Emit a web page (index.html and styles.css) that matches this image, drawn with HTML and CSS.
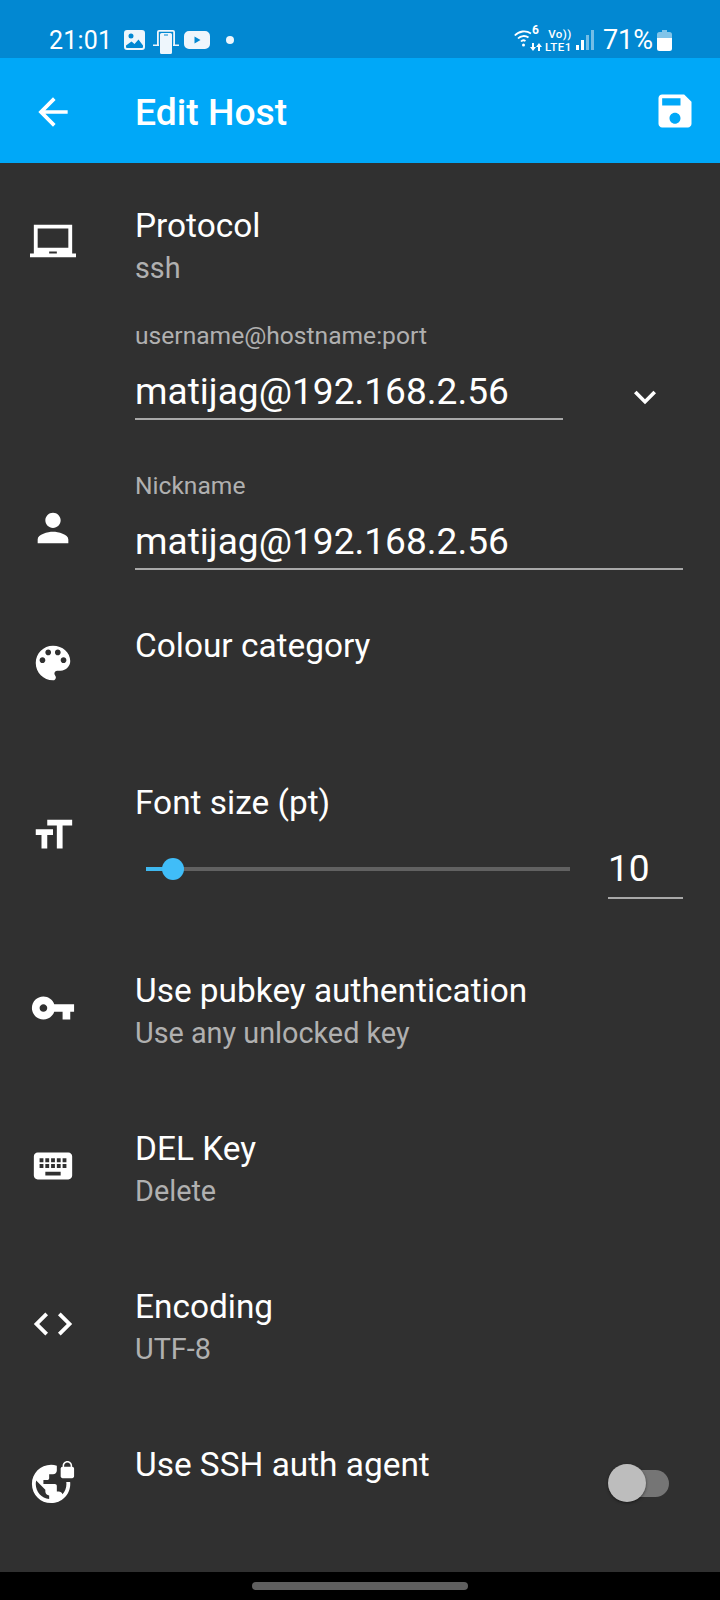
FILE: index.html
```html
<!DOCTYPE html>
<html lang="en">
<head>
<meta charset="utf-8">
<title>Edit Host</title>
<link rel="stylesheet" href="styles.css">
</head>
<body>
<div class="phone">
  <header class="status">
    <span class="clock">21:01</span>
    <div class="notif">
      <svg class="si-img" viewBox="0 0 21 20"><path fill-rule="evenodd" d="M3 0h15a3 3 0 0 1 3 3v14a3 3 0 0 1-3 3H3a3 3 0 0 1-3-3V3a3 3 0 0 1 3-3zM2 15.500V17a1 1 0 0 0 1 1h15a1 1 0 0 0 1-1v-1.500l-4.500-6-4 4.500-3-2.500zM7 3.500a2.500 2.500 0 1 0 0 5 2.500 2.500 0 0 0 0-5z"/></svg>
      <svg class="si-link" viewBox="0 0 26 24"><path d="M4 2A2 2 0 0 1 6 0h14a2 2 0 0 1 2 2v13h-1.800V2A.2.2 0 0 0 20 1.800H6a.2.2 0 0 0-.2.2v13H4zM0 14.500h6V16H0zM20 14.500h6V16h-6z"/><path fill-rule="evenodd" d="M8.500 3h9A1.500 1.500 0 0 1 19 4.500v18a1.500 1.500 0 0 1-1.500 1.500h-9A1.500 1.500 0 0 1 7 22.500v-18A1.500 1.500 0 0 1 8.500 3zM11 4.500v1h4v-1z"/></svg>
      <svg class="si-yt" viewBox="0 0 26 18"><path fill-rule="evenodd" d="M5 0h16a5 5 0 0 1 5 5v8a5 5 0 0 1-5 5H5a5 5 0 0 1-5-5V5a5 5 0 0 1 5-5zM10.500 5.500v7l6-3.500z"/></svg>
      <span class="dot"></span>
    </div>
    <div class="sys">
      <svg class="si-wifi" viewBox="0 0 29 21"><path class="arc" d="M.8 5.500A12.500 12.500 0 0 1 17 3.500M4 8.500A8 8 0 0 1 14.500 7.500M7 11.500A3.500 3.500 0 0 1 11.500 11"/><circle cx="9.500" cy="15" r="1.500"/><path d="M18 13h2v4h2l-3 4-3-4h2zM26 21h-2v-4h-2l3-4 3 4h-2z"/></svg>
      <span class="six">6</span>
      <div class="volte"><span>Vo))</span><span>LTE1</span></div>
      <svg class="si-bars" viewBox="0 0 19 20"><rect x="0" y="15" width="3" height="5" fill="#fff"/><rect x="5" y="10" width="3" height="10" fill="#fff"/><rect x="10" y="5" width="3" height="15" fill="#fff" opacity=".45"/><rect x="15" y="0" width="3" height="20" fill="#fff" opacity=".45"/></svg>
      <span class="pct">71%</span>
      <svg class="si-bat" viewBox="0 0 15 21"><path opacity=".5" d="M5 0h5v2h2.500A2.500 2.500 0 0 1 15 4.500V8H0V4.500A2.500 2.500 0 0 1 2.500 2H5z"/><path d="M0 8h15v10.500a2.500 2.500 0 0 1-2.500 2.500h-10A2.500 2.500 0 0 1 0 18.500z"/></svg>
    </div>
  </header>

  <div class="appbar">
    <svg class="bar-icon back" viewBox="0 0 24 24"><path d="M20 11H7.830l5.590-5.590L12 4l-8 8 8 8 1.410-1.410L7.830 13H20v-2z"/></svg>
    <h1 class="bar-title">Edit Host</h1>
    <svg class="bar-icon save" viewBox="0 0 24 24"><path d="M17 3H5c-1.110 0-2 .9-2 2v14c0 1.100.89 2 2 2h14c1.100 0 2-.9 2-2V7l-4-4zm-5 16c-1.660 0-3-1.340-3-3s1.340-3 3-3 3 1.340 3 3-1.340 3-3 3zm3-10H5V5h10v4z"/></svg>
  </div>

  <main class="content">
    <section class="row row-protocol">
      <svg class="icon" viewBox="0 0 24 24"><path d="M22 18V3H2v15H0v2h24v-2h-2zm-8 0h-4v-1h4v1zm6-3H4V5h16v10z"/></svg>
      <div class="body">
        <div class="title">Protocol</div>
        <div class="sub">ssh</div>
      </div>
    </section>

    <section class="field field-uri">
      <div class="field-main">
        <label class="field-label">username@hostname:port</label>
        <div class="field-value">matijag@192.168.2.56</div>
      </div>
      <svg class="chevron" viewBox="0 0 24 24"><path d="M16.590 8.590L12 13.170 7.410 8.590 6 10l6 6 6-6z"/></svg>
    </section>

    <section class="field field-nick">
      <svg class="icon" viewBox="0 0 24 24"><path d="M12 12c2.210 0 4-1.790 4-4s-1.790-4-4-4-4 1.790-4 4 1.790 4 4 4zm0 2c-2.670 0-8 1.340-8 4v2h16v-2c0-2.660-5.330-4-8-4z"/></svg>
      <div class="field-main">
        <label class="field-label">Nickname</label>
        <div class="field-value">matijag@192.168.2.56</div>
      </div>
    </section>

    <section class="row row-colour">
      <svg class="icon" viewBox="0 0 24 24"><path d="M12 3c-4.970 0-9 4.030-9 9s4.030 9 9 9c.83 0 1.500-.67 1.500-1.500 0-.39-.15-.74-.39-1.010-.23-.26-.38-.61-.38-.99 0-.83.67-1.500 1.500-1.500H16c2.760 0 5-2.240 5-5 0-4.420-4.030-8-9-8zm-5.500 9c-.83 0-1.500-.67-1.500-1.500S5.670 9 6.500 9 8 9.670 8 10.500 7.330 12 6.500 12zm3-4C8.670 8 8 7.330 8 6.500S8.670 5 9.500 5s1.500.67 1.500 1.500S10.330 8 9.500 8zm5 0c-.83 0-1.500-.67-1.500-1.500S13.670 5 14.500 5s1.500.67 1.500 1.500S15.330 8 14.500 8zm3 4c-.83 0-1.500-.67-1.500-1.500S16.670 9 17.500 9s1.500.67 1.500 1.500-.67 1.500-1.500 1.500z"/></svg>
      <div class="body"><div class="title">Colour category</div></div>
    </section>

    <section class="row row-font">
      <svg class="icon" viewBox="0 0 24 24"><path d="M9 4v3h5v12h3V7h5V4H9zm-6 8h3v7h3v-7h3V9H3v3z"/></svg>
      <div class="body">
        <div class="title">Font size (pt)</div>
        <div class="slider-line">
          <div class="slider"><span class="track-on"></span><span class="thumb"></span></div>
          <div class="num">10</div>
        </div>
      </div>
    </section>

    <section class="row">
      <svg class="icon" viewBox="0 0 24 24"><path d="M12.650 10C11.830 7.670 9.610 6 7 6c-3.310 0-6 2.690-6 6s2.690 6 6 6c2.610 0 4.830-1.670 5.650-4H17v4h4v-4h2v-4H12.650zM7 14c-1.100 0-2-.9-2-2s.9-2 2-2 2 .9 2 2-.9 2-2 2z"/></svg>
      <div class="body">
        <div class="title">Use pubkey authentication</div>
        <div class="sub">Use any unlocked key</div>
      </div>
    </section>

    <section class="row">
      <svg class="icon" viewBox="0 0 24 24"><path d="M20 5H4c-1.100 0-1.990.9-1.990 2L2 17c0 1.100.9 2 2 2h16c1.100 0 2-.9 2-2V7c0-1.100-.9-2-2-2zm-9 3h2v2h-2V8zm0 3h2v2h-2v-2zM8 8h2v2H8V8zm0 3h2v2H8v-2zm-1 2H5v-2h2v2zm0-3H5V8h2v2zm9 7H8v-2h8v2zm0-4h-2v-2h2v2zm0-3h-2V8h2v2zm3 3h-2v-2h2v2zm0-3h-2V8h2v2z"/></svg>
      <div class="body">
        <div class="title">DEL Key</div>
        <div class="sub">Delete</div>
      </div>
    </section>

    <section class="row">
      <svg class="icon" viewBox="0 0 24 24"><path d="M9.400 16.600L4.800 12l4.600-4.600L8 6l-6 6 6 6 1.400-1.400zm5.200 0l4.600-4.600-4.600-4.600L16 6l6 6-6 6-1.400-1.400z"/></svg>
      <div class="body">
        <div class="title">Encoding</div>
        <div class="sub">UTF-8</div>
      </div>
    </section>

    <section class="row row-agent">
      <svg class="icon" viewBox="0 0 24 24"><path d="M22 4v-.5C22 2.120 20.880 1 19.500 1S17 2.120 17 3.500V4c-.55 0-1 .45-1 1v4c0 .55.45 1 1 1h5c.55 0 1-.45 1-1V5c0-.55-.45-1-1-1zm-.8 0h-3.400v-.5c0-.94.76-1.700 1.700-1.700s1.700.76 1.700 1.700V4zm-2.280 8c.04.33.08.66.08 1 0 2.080-.8 3.970-2.100 5.390-.26-.81-1-1.390-1.900-1.390h-1v-3c0-.55-.45-1-1-1H7v-2h2c.55 0 1-.45 1-1V8h2c1.100 0 2-.9 2-2V3.460c-.95-.3-1.950-.46-3-.46C5.480 3 1 7.480 1 13s4.480 10 10 10 10-4.480 10-10c0-.34-.02-.67-.05-1h-2.030zM10 20.930c-3.950-.49-7-3.850-7-7.930 0-.62.08-1.210.21-1.790L8 16v1c0 1.100.9 2 2 2v1.930z"/></svg>
      <div class="body"><div class="title">Use SSH auth agent</div></div>
      <div class="switch"><span class="switch-thumb"></span></div>
    </section>
  </main>

  <footer class="nav"><span class="handle"></span></footer>
</div>
</body>
</html>
```
FILE: styles.css
```css
* { box-sizing: border-box; }
html, body { margin: 0; padding: 0; }
body { background: #000; font-family: Roboto, "Noto Sans", sans-serif; color: #fff; }
svg { fill: currentColor; display: block; flex: none; }

.phone { width: 720px; height: 1600px; display: flex; flex-direction: column; overflow: hidden; }

.status { height: 58px; flex: none; background: #0288d2; display: flex; align-items: center; padding: 22px 48px 0 49px; font-size: 25px; }
.clock { letter-spacing: .2px; }
.notif { display: flex; align-items: center; margin-left: 12px; color: #eef6fc; }
.si-img { width: 21px; height: 20px; }
.si-link { width: 26px; height: 24px; margin-left: 8px; margin-top: 4px; }
.si-yt { width: 26px; height: 18px; margin-left: 5px; }
.dot { width: 8px; height: 8px; border-radius: 50%; background: #eef6fc; margin-left: 16px; }
.sys { margin-left: auto; display: flex; align-items: center; position: relative; }
.si-wifi { width: 29px; height: 21px; }
.arc { fill: none; stroke: currentColor; stroke-width: 1.8; }
.six { position: absolute; left: 18px; top: 0; font-size: 12px; font-weight: 700; line-height: 12px; }
.volte { display: flex; flex-direction: column; align-items: flex-end; font-size: 11.500px; font-weight: 500; line-height: 13.500px; letter-spacing: .5px; margin: 2px 0 0 2px; }
.si-bars { width: 19px; height: 20px; margin-left: 4px; }
.pct { font-size: 27px; margin-left: 8px; }
.si-bat { width: 15px; height: 21px; margin-left: 4px; }

.appbar { height: 105px; flex: none; background: #00a8f8; display: flex; align-items: center; padding-right: 23px; }
.bar-icon { width: 44px; height: 44px; }
.back { margin-left: 31px; margin-top: 2px; }
.bar-title { margin: 4px 0 0 60px; font-size: 37.300px; font-weight: 500; line-height: 1; }
.save { margin-left: auto; }

.content { flex: 1; min-height: 0; background: #303030; padding-top: 25px; }

.row { display: flex; align-items: flex-start; height: 158px; position: relative; padding-top: 19px; }
.icon { width: 46px; height: 46px; margin: 14px 31px 0 30px; }
.icon + .body { margin-left: 28px; }
.body { flex: 1; min-width: 0; }
.title { font-size: 33.400px; line-height: 40px; }
.sub { font-size: 28.800px; line-height: 44px; color: #b0b0b0; }
.row-protocol { height: 132px; padding-top: 18px; }
.row-protocol .icon { margin-top: 13px; }

.field { display: flex; align-items: flex-start; position: relative; }
.field-label { display: block; font-size: 24.600px; line-height: 32px; color: #b0b0b0; }
.field-value { font-size: 37.100px; line-height: 50px; padding-top: 15px; height: 68px; border-bottom: 2px solid #a8a8a8; }
.field-main { flex: 1; }
.field-uri { padding: 0 0 0 135px; height: 150px; }
.field-uri .field-main { flex: none; width: 428px; }
.chevron { width: 44px; height: 44px; margin: 55px 0 0 60px; }
.field-nick { height: 156px; padding-right: 37px; }
.field-nick .icon { margin-top: 35px; }
.field-nick .field-main { margin-left: 28px; }
.row-colour { padding-top: 0; height: 157px; }
.row-font { padding-top: 0; height: 169px; }
.row-font .icon { margin-top: 29px; }
.row-agent { height: 146px; }

.slider-line { display: flex; align-items: center; margin-top: 15px; padding-right: 37px; }
.slider { width: 424px; height: 4px; margin-left: 11px; background: #616161; position: relative; }
.track-on { position: absolute; left: 0; top: 0; bottom: 0; width: 27px; background: #3fb8ef; }
.thumb { position: absolute; left: 16px; top: -9px; width: 22px; height: 22px; border-radius: 50%; background: #40bdf8; }
.num { margin-left: 38px; width: 75px; height: 61px; font-size: 37.100px; line-height: 62px; border-bottom: 2px solid #a8a8a8; }

.switch { position: absolute; left: 609px; top: 44px; width: 60px; height: 27px; border-radius: 14px; background: #757575; }
.switch-thumb { position: absolute; left: -1px; top: -6px; width: 38px; height: 38px; border-radius: 50%; background: #bdbdbd; box-shadow: 0 1px 3px rgba(0,0,0,.5); }

.nav { height: 28px; flex: none; background: #000; display: flex; justify-content: center; padding-top: 10px; }
.handle { width: 216px; height: 8px; border-radius: 4px; background: #5f5f5f; }
```
